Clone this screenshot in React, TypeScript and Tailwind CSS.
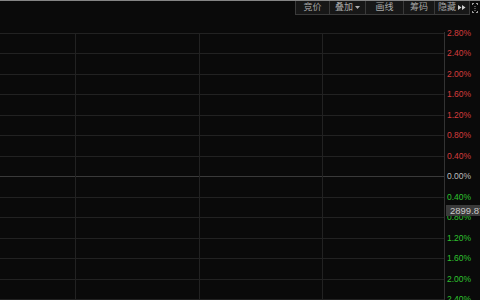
import React from 'react';

const FONT = { fontFamily: '"Liberation Sans", "Noto Sans CJK SC", sans-serif' };

const levels = Array.from({ length: 14 }, (_, i) => {
  const v = Math.abs(2.8 - 0.4 * i);
  return {
    label: v.toFixed(2) + '%',
    y: Math.floor(33 + i * 20.5) - 15,
    color: i < 7 ? 'text-[#d43c3c]' : i === 7 ? 'text-[#bdbdbd]' : 'text-[#2ec22e]',
    zero: i === 7,
  };
});

const verticals = [75, 199, 322];

function ToolButton({ w, children }: { w: string; children: React.ReactNode }) {
  return (
    <div
      className={`${w} h-[14px] flex items-center justify-center gap-[2px] bg-[#171717] border border-t-0 border-[#3a3a3a] -ml-px text-[9px] leading-none text-[#a8a8a8]`}
    >
      {children}
    </div>
  );
}

export default function App() {
  return (
    <div
      className="w-[480px] h-[300px] bg-[#0a0a0a] overflow-hidden flex flex-col border-t border-[#858585]"
      style={FONT}
    >
      <div className="h-[14px] flex justify-end items-start">
        <ToolButton w="w-[35px]">竞价</ToolButton>
        <ToolButton w="w-[37px]">
          叠加
          <svg width="5" height="4" viewBox="0 0 5 4">
            <path d="M0 0h5L2.5 3z" fill="#b0b0b0" />
          </svg>
        </ToolButton>
        <ToolButton w="w-[39px]">画线</ToolButton>
        <ToolButton w="w-[32px]">筹码</ToolButton>
        <ToolButton w="w-[36px]">
          隐藏
          <svg width="8" height="5" viewBox="0 0 8 5">
            <path d="M0 0l3.5 2.5L0 5zM4 0l3.5 2.5L4 5z" fill="#d0d0d0" />
          </svg>
        </ToolButton>
        <div className="w-[10px] h-[14px] flex items-center justify-center">
          <svg width="8" height="12" viewBox="0 0 8 12">
            <path d="M1 1.5h2M5 1.5h2M1 10.5h2M5 10.5h2M1.5 1v2M6.5 1v2M1.5 9v2M6.5 9v2" stroke="#9a9a9a" strokeWidth="1" />
            <rect x="3.5" y="4" width="1" height="1" fill="#9a9a9a" />
            <rect x="3.5" y="6" width="1" height="1" fill="#9a9a9a" />
            <rect x="3.5" y="8" width="1" height="1" fill="#9a9a9a" />
          </svg>
        </div>
      </div>

      <div className="flex-1 flex">
        <svg width="445" height="285" className="shrink-0 block">
          {levels.map((l) => (
            <line
              key={l.y}
              x1="0"
              x2="445"
              y1={l.y + 0.5}
              y2={l.y + 0.5}
              stroke={l.zero ? '#3a3a3a' : '#222222'}
              strokeWidth="1"
            />
          ))}
          {verticals.map((x) => (
            <line key={x} x1={x + 0.5} x2={x + 0.5} y1="18" y2="285" stroke="#222222" strokeWidth="1" />
          ))}
          <line x1="444.5" x2="444.5" y1="17" y2="285" stroke="#333333" strokeWidth="1" />
        </svg>

        <div className="relative flex-1">
          {levels.map((l) => (
            <span
              key={l.y}
              className={`absolute left-[2px] text-[8.5px] leading-none ${l.color}`}
              style={{ top: l.y - 4 }}
            >
              {l.label}
            </span>
          ))}
          <div className="absolute left-px top-[190px] w-[40px] h-[11px] bg-[#3a3a3a] flex items-center pl-[4px] text-[9.5px] leading-none text-[#c8c8c8] whitespace-nowrap overflow-hidden">
            2899.87
          </div>
        </div>
      </div>
    </div>
  );
}
